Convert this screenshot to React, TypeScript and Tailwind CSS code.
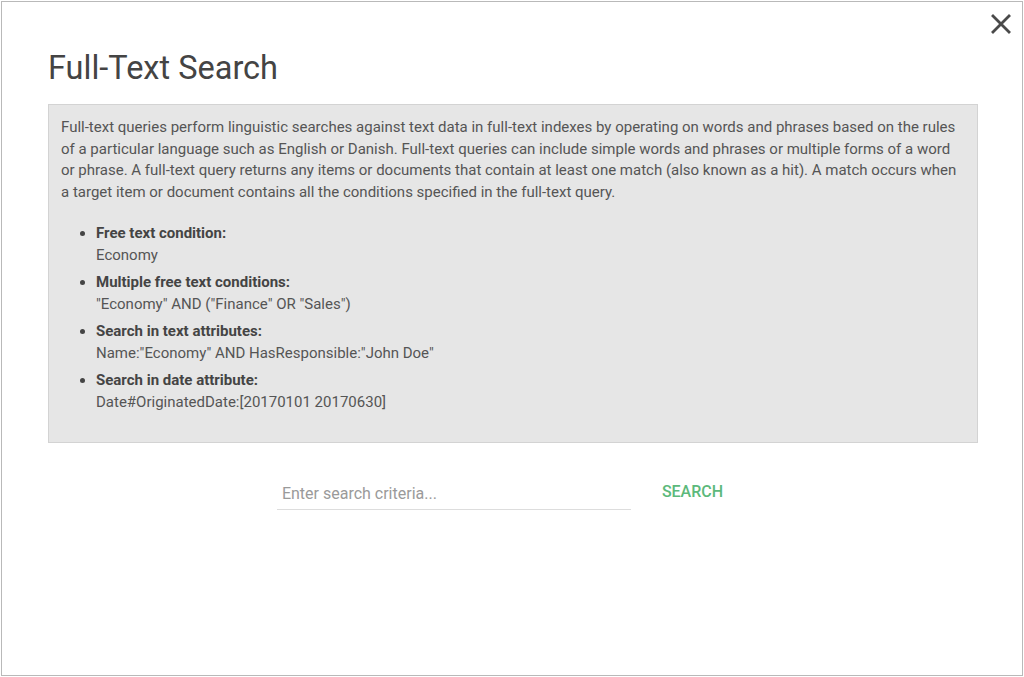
const examples = [
  { label: "Free text condition:", value: "Economy" },
  { label: "Multiple free text conditions:", value: '"Economy" AND ("Finance" OR "Sales")' },
  { label: "Search in text attributes:", value: 'Name:"Economy" AND HasResponsible:"John Doe"' },
  { label: "Search in date attribute:", value: "Date#OriginatedDate:[20170101 20170630]" },
];

export default function App() {
  return (
    <div className="h-[677px] w-[1024px] bg-white p-px" style={{ fontFamily: "Roboto, 'Liberation Sans', sans-serif" }}>
      <div className="relative h-full w-full border border-[#b9b9b9] bg-white pl-[46px] pr-[44px] pt-[47px]">
        <button className="absolute right-[10px] top-[11px] text-[#4a4a4a]" aria-label="Close">
          <svg width="22" height="22" viewBox="0 0 22 22" fill="none" stroke="currentColor" strokeWidth="2.8" strokeLinecap="square">
            <path d="M3 3L19 19M19 3L3 19" />
          </svg>
        </button>

        <h1 className="text-[32.5px] leading-[38px] text-[#444]">Full-Text Search</h1>

        <div className="mt-[17px] border border-[#d3d3d3] bg-[#e6e6e6] px-[12px] pb-[29px] pt-[12px] text-[15px] text-[#555]">
          <p className="leading-[21.5px]">
            Full-text queries perform linguistic searches against text data in full-text indexes by operating on words and phrases based on the rules of a particular language such as English or Danish. Full-text queries can include simple words and phrases or multiple forms of a word or phrase. A full-text query returns any items or documents that contain at least one match (also known as a hit). A match occurs when a target item or document contains all the conditions specified in the full-text query.
          </p>
          <ul className="mt-[19px] flex list-disc flex-col gap-[5px] pl-[35px] marker:text-[#444]">
            {examples.map((ex) => (
              <li key={ex.label} className="leading-[22px]">
                <div className="font-bold text-[#444]">{ex.label}</div>
                <div>{ex.value}</div>
              </li>
            ))}
          </ul>
        </div>

        <div className="mt-[34px] flex items-center justify-center gap-[31px] pr-[26px]">
          <input
            type="text"
            placeholder="Enter search criteria..."
            className="h-[33px] w-[354px] border-b border-[#ddd] bg-transparent px-[5px] text-[16px] text-[#444] outline-none placeholder:text-[#9a9a9a]"
          />
          <button className="-mt-[4px] h-[33px] text-[16px] font-medium uppercase text-[#5cb97b]">Search</button>
        </div>
      </div>
    </div>
  );
}
